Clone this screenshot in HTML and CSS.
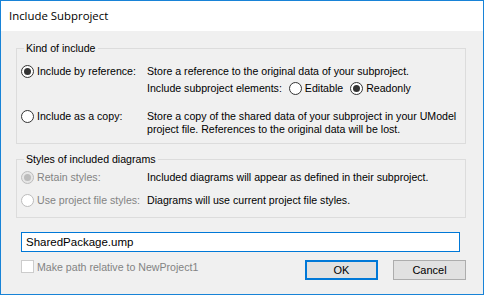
FILE: index.html
```html
<!DOCTYPE html>
<html lang="en">
<head>
    <meta charset="UTF-8">
    <title>Include Subproject</title>
    <link rel="stylesheet" href="styles.css">
</head>
<body>

    <div class="window">
        <!-- Заголовок окна -->
        <div class="titlebar">Include Subproject</div>

        <div class="content">
            <!-- Kind of include -->
            <div class="group group-kind">
                <div class="group-title">Kind of include</div>

                <div class="option-row">
                    <div class="option-label">
                        <span class="radio checked"></span>
                        <span>Include by reference:</span>
                    </div>
                    <div class="option-desc">
                        <div class="line">Store a reference to the original data of your subproject.</div>
                        <div class="line elements">
                            <span>Include subproject elements:</span>
                            <span class="radio"></span>
                            <span>Editable</span>
                            <span class="radio checked"></span>
                            <span>Readonly</span>
                        </div>
                    </div>
                </div>

                <div class="option-row second">
                    <div class="option-label">
                        <span class="radio"></span>
                        <span>Include as a copy:</span>
                    </div>
                    <div class="option-desc">
                        <div class="line">Store a copy of the shared data of your subproject in your UModel</div>
                        <div class="line">project file. References to the original data will be lost.</div>
                    </div>
                </div>
            </div>

            <!-- Styles of included diagrams -->
            <div class="group group-styles">
                <div class="group-title">Styles of included diagrams</div>

                <div class="option-row">
                    <div class="option-label disabled">
                        <span class="radio checked"></span>
                        <span>Retain styles:</span>
                    </div>
                    <div class="option-desc">Included diagrams will appear as defined in their subproject.</div>
                </div>

                <div class="option-row third">
                    <div class="option-label disabled">
                        <span class="radio"></span>
                        <span>Use project file styles:</span>
                    </div>
                    <div class="option-desc">Diagrams will use current project file styles.</div>
                </div>
            </div>

            <input class="path-input" type="text" value="SharedPackage.ump">

            <div class="bottom-row">
                <div class="check-label">
                    <span class="checkbox"></span>
                    <span>Make path relative to NewProject1</span>
                </div>
                <button class="btn btn-ok">OK</button>
                <button class="btn">Cancel</button>
            </div>
        </div>
    </div>

</body>
</html>
```

FILE: styles.css
```css
body {
    margin: 0;
    padding: 0;
    background-color: #f0f0f0;
    font-family: 'Liberation Sans', Arial, sans-serif;
    font-size: 10.6px;
    color: #000;
}

/* Окно диалога */
.window {
    width: 484px;
    height: 295px;
    box-sizing: border-box;
    border: 1px solid #1883d7;
    background-color: #f0f0f0;
    display: flex;
    flex-direction: column;
}

.titlebar {
    height: 30px;
    line-height: 30px;
    background-color: #fff;
    padding-left: 8px;
    font-family: 'Open Sans', 'Noto Sans', sans-serif;
    font-size: 11.4px;
}

.content {
    padding: 17px 17px 0 15px;
}

/* Рамки групп */
.group {
    position: relative;
    border: 1px solid #dcdcdc;
    padding-left: 4px;
}

.group-title {
    position: absolute;
    top: -7px;
    left: 7px;
    padding: 0 2px;
    line-height: 13px;
    background-color: #f0f0f0;
}

.group-kind {
    padding-top: 16px;
    padding-bottom: 7px;
}

.group-styles {
    margin-top: 15px;
    padding-top: 11px;
    padding-bottom: 10px;
}

.option-row {
    display: flex;
    line-height: 13px;
    white-space: nowrap;
}

.option-row.second {
    margin-top: 15px;
}

.option-row.third {
    margin-top: 10px;
}

.option-label {
    width: 126px;
    flex-shrink: 0;
    display: flex;
    align-items: center;
    height: 13px;
    gap: 3px;
}

.option-label.disabled {
    color: #838383;
}

.line {
    height: 13px;
}

.line.elements {
    margin-top: 4px;
    display: flex;
    align-items: center;
    gap: 3px;
}

.line.elements .radio {
    margin-left: 4px;
}

/* Радиокнопки */
.radio {
    display: inline-block;
    width: 13px;
    height: 13px;
    box-sizing: border-box;
    border: 1px solid #333;
    border-radius: 50%;
    background-color: #fff;
    position: relative;
    flex-shrink: 0;
}

.radio.checked::after {
    content: '';
    position: absolute;
    left: 2px;
    top: 2px;
    width: 7px;
    height: 7px;
    border-radius: 50%;
    background-color: #333;
}

.disabled .radio {
    border-color: #bcbcbc;
    background-color: #fff;
}

.disabled .radio.checked {
    background-color: #e6e6e6;
}

.disabled .radio.checked::after {
    background-color: #bcbcbc;
}

/* Поле пути */
.path-input {
    display: block;
    box-sizing: border-box;
    width: 439px;
    height: 20px;
    margin: 14px 0 0 5px;
    border: 1px solid #0078d7;
    padding: 0 4px;
    font-family: 'Liberation Sans', Arial, sans-serif;
    font-size: 11.5px;
    outline: none;
}

.bottom-row {
    display: flex;
    align-items: flex-start;
    margin: 8px 0 0 5px;
}

.check-label {
    flex: 1;
    display: flex;
    align-items: center;
    gap: 3px;
    height: 13px;
    color: #838383;
}

.checkbox {
    width: 13px;
    height: 13px;
    box-sizing: border-box;
    border: 1px solid #cccccc;
    background-color: #fff;
}

.btn {
    width: 73px;
    height: 20px;
    box-sizing: border-box;
    margin-left: 15px;
    border: 1px solid #adadad;
    background-color: #e1e1e1;
    font-family: 'Liberation Sans', Arial, sans-serif;
    font-size: 11px;
    color: #000;
    padding: 0;
}

.btn-ok {
    border: 2px solid #0078d7;
}
```
